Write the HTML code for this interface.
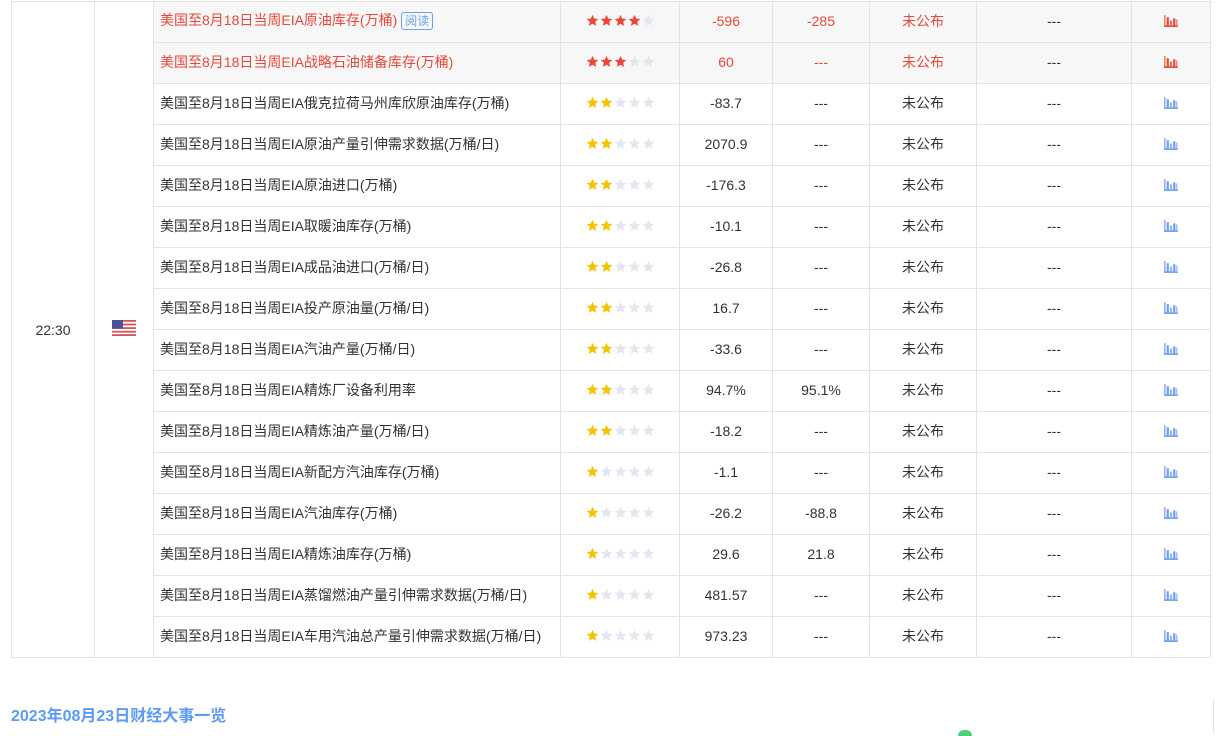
<!DOCTYPE html>
<html><head><meta charset="utf-8"><style>
body{margin:0;width:1219px;height:733px;overflow:hidden;background:#fff;font-family:"Liberation Sans","Noto Sans CJK SC",sans-serif;font-size:14px;color:#333;position:relative}
table{position:absolute;left:11px;top:1px;border-collapse:collapse;table-layout:fixed;width:1200px}
td{border:1px solid #e2e2e2;height:38px;padding:0 0 2px 0;box-sizing:content-box;text-align:center;white-space:nowrap;line-height:16px}
td.n{text-align:left;padding-left:6px}
tr.h td{background:#f7f7f7;color:#e8473a}
tr.h td.t,tr.h td.f{background:#fff;color:#333}
td.t,td.f{padding:0}
.s{display:inline-block;vertical-align:-1px}
.rd{display:inline-block;border:1px solid #6aa0f0;color:#6aa0f0;border-radius:3px;font-size:12px;padding:0 3px;line-height:16px;margin-left:4px}
h2{position:absolute;left:11px;top:702px;margin:0;font-size:16px;color:#5b9bf5;font-weight:bold}
.c{vertical-align:-1px}
</style></head><body>
<svg width="0" height="0" style="position:absolute"><defs>
<symbol id="st" viewBox="0 0 24 24"><path d="M12 1.5l3.1 7.1 7.7.7-5.8 5.1 1.7 7.6L12 18l-6.7 4 1.7-7.6L1.2 9.3l7.7-.7z"/></symbol>
<symbol id="cr" viewBox="0 0 13 11"><rect x="0" y="0" width="1.5" height="11" fill="#f08a50"/><rect x="0" y="9.5" width="13" height="1.5" fill="#e8473a"/><rect x="2.5" y="2" width="2" height="8" fill="#e8473a"/><rect x="5.5" y="5" width="2" height="5" fill="#f06a5a"/><rect x="8.5" y="3" width="2" height="7" fill="#e8473a"/><rect x="11" y="4" width="1.5" height="6" fill="#f08a80"/></symbol>
<symbol id="cb" viewBox="0 0 13 11"><rect x="0" y="0" width="1.5" height="11" fill="#a9a9f5"/><rect x="0" y="9.5" width="13" height="1.5" fill="#6aa0f0"/><rect x="2.5" y="2" width="2" height="8" fill="#6aa0f0"/><rect x="5.5" y="5" width="2" height="5" fill="#8ab8f5"/><rect x="8.5" y="3" width="2" height="7" fill="#6aa0f0"/><rect x="11" y="4" width="1.5" height="6" fill="#a9c0f5"/></symbol>
<symbol id="s4" viewBox="0 0 69 13"><g fill="#e8473a"><use href="#st" x="0" width="13" height="13"/><use href="#st" x="14" width="13" height="13"/><use href="#st" x="28" width="13" height="13"/><use href="#st" x="42" width="13" height="13"/></g><g fill="#e3e6f0"><use href="#st" x="56" width="13" height="13"/></g></symbol>
<symbol id="s3" viewBox="0 0 69 13"><g fill="#e8473a"><use href="#st" x="0" width="13" height="13"/><use href="#st" x="14" width="13" height="13"/><use href="#st" x="28" width="13" height="13"/></g><g fill="#e3e6f0"><use href="#st" x="42" width="13" height="13"/><use href="#st" x="56" width="13" height="13"/></g></symbol>
<symbol id="s2" viewBox="0 0 69 13"><g fill="#f5c400"><use href="#st" x="0" width="13" height="13"/><use href="#st" x="14" width="13" height="13"/></g><g fill="#e3e6f0"><use href="#st" x="28" width="13" height="13"/><use href="#st" x="42" width="13" height="13"/><use href="#st" x="56" width="13" height="13"/></g></symbol>
<symbol id="s1" viewBox="0 0 69 13"><g fill="#f5c400"><use href="#st" x="0" width="13" height="13"/></g><g fill="#e3e6f0"><use href="#st" x="14" width="13" height="13"/><use href="#st" x="28" width="13" height="13"/><use href="#st" x="42" width="13" height="13"/><use href="#st" x="56" width="13" height="13"/></g></symbol>
</defs></svg>
<table>
<colgroup><col style="width:83px"><col style="width:59px"><col style="width:407px"><col style="width:119px"><col style="width:93px"><col style="width:97px"><col style="width:107px"><col style="width:155px"><col style="width:79px"><col style="width:1px"></colgroup>
<tr class="h"><td class="t" rowspan="16">22:30</td><td class="f" rowspan="16"><svg width="24" height="16" viewBox="0 0 24 16"><rect width="24" height="16" rx="2" fill="#fff"/><g fill="#d9535a"><rect y="0" width="24" height="1.8"/><rect y="3.6" width="24" height="1.8"/><rect y="7.2" width="24" height="1.8"/><rect y="10.8" width="24" height="1.8"/><rect y="14.2" width="24" height="1.8"/></g><rect width="11" height="8.5" fill="#4a5597"/></svg></td><td class="n">美国至8月18日当周EIA原油库存(万桶)<span class="rd">阅读</span></td><td><svg class="s" width="69" height="13"><use href="#s4"/></svg></td><td>-596</td><td>-285</td><td>未公布</td><td style="color:#333">---</td><td><svg class="c" width="14" height="12"><use href="#cr"/></svg></td></tr>
<tr class="h"><td class="n">美国至8月18日当周EIA战略石油储备库存(万桶)</td><td><svg class="s" width="69" height="13"><use href="#s3"/></svg></td><td>60</td><td>---</td><td>未公布</td><td style="color:#333">---</td><td><svg class="c" width="14" height="12"><use href="#cr"/></svg></td></tr>
<tr><td class="n">美国至8月18日当周EIA俄克拉荷马州库欣原油库存(万桶)</td><td><svg class="s" width="69" height="13"><use href="#s2"/></svg></td><td>-83.7</td><td>---</td><td>未公布</td><td>---</td><td><svg class="c" width="14" height="12"><use href="#cb"/></svg></td></tr>
<tr><td class="n">美国至8月18日当周EIA原油产量引伸需求数据(万桶/日)</td><td><svg class="s" width="69" height="13"><use href="#s2"/></svg></td><td>2070.9</td><td>---</td><td>未公布</td><td>---</td><td><svg class="c" width="14" height="12"><use href="#cb"/></svg></td></tr>
<tr><td class="n">美国至8月18日当周EIA原油进口(万桶)</td><td><svg class="s" width="69" height="13"><use href="#s2"/></svg></td><td>-176.3</td><td>---</td><td>未公布</td><td>---</td><td><svg class="c" width="14" height="12"><use href="#cb"/></svg></td></tr>
<tr><td class="n">美国至8月18日当周EIA取暖油库存(万桶)</td><td><svg class="s" width="69" height="13"><use href="#s2"/></svg></td><td>-10.1</td><td>---</td><td>未公布</td><td>---</td><td><svg class="c" width="14" height="12"><use href="#cb"/></svg></td></tr>
<tr><td class="n">美国至8月18日当周EIA成品油进口(万桶/日)</td><td><svg class="s" width="69" height="13"><use href="#s2"/></svg></td><td>-26.8</td><td>---</td><td>未公布</td><td>---</td><td><svg class="c" width="14" height="12"><use href="#cb"/></svg></td></tr>
<tr><td class="n">美国至8月18日当周EIA投产原油量(万桶/日)</td><td><svg class="s" width="69" height="13"><use href="#s2"/></svg></td><td>16.7</td><td>---</td><td>未公布</td><td>---</td><td><svg class="c" width="14" height="12"><use href="#cb"/></svg></td></tr>
<tr><td class="n">美国至8月18日当周EIA汽油产量(万桶/日)</td><td><svg class="s" width="69" height="13"><use href="#s2"/></svg></td><td>-33.6</td><td>---</td><td>未公布</td><td>---</td><td><svg class="c" width="14" height="12"><use href="#cb"/></svg></td></tr>
<tr><td class="n">美国至8月18日当周EIA精炼厂设备利用率</td><td><svg class="s" width="69" height="13"><use href="#s2"/></svg></td><td>94.7%</td><td>95.1%</td><td>未公布</td><td>---</td><td><svg class="c" width="14" height="12"><use href="#cb"/></svg></td></tr>
<tr><td class="n">美国至8月18日当周EIA精炼油产量(万桶/日)</td><td><svg class="s" width="69" height="13"><use href="#s2"/></svg></td><td>-18.2</td><td>---</td><td>未公布</td><td>---</td><td><svg class="c" width="14" height="12"><use href="#cb"/></svg></td></tr>
<tr><td class="n">美国至8月18日当周EIA新配方汽油库存(万桶)</td><td><svg class="s" width="69" height="13"><use href="#s1"/></svg></td><td>-1.1</td><td>---</td><td>未公布</td><td>---</td><td><svg class="c" width="14" height="12"><use href="#cb"/></svg></td></tr>
<tr><td class="n">美国至8月18日当周EIA汽油库存(万桶)</td><td><svg class="s" width="69" height="13"><use href="#s1"/></svg></td><td>-26.2</td><td>-88.8</td><td>未公布</td><td>---</td><td><svg class="c" width="14" height="12"><use href="#cb"/></svg></td></tr>
<tr><td class="n">美国至8月18日当周EIA精炼油库存(万桶)</td><td><svg class="s" width="69" height="13"><use href="#s1"/></svg></td><td>29.6</td><td>21.8</td><td>未公布</td><td>---</td><td><svg class="c" width="14" height="12"><use href="#cb"/></svg></td></tr>
<tr><td class="n">美国至8月18日当周EIA蒸馏燃油产量引伸需求数据(万桶/日)</td><td><svg class="s" width="69" height="13"><use href="#s1"/></svg></td><td>481.57</td><td>---</td><td>未公布</td><td>---</td><td><svg class="c" width="14" height="12"><use href="#cb"/></svg></td></tr>
<tr><td class="n">美国至8月18日当周EIA车用汽油总产量引伸需求数据(万桶/日)</td><td><svg class="s" width="69" height="13"><use href="#s1"/></svg></td><td>973.23</td><td>---</td><td>未公布</td><td>---</td><td><svg class="c" width="14" height="12"><use href="#cb"/></svg></td></tr>
</table>
<h2>2023年08月23日财经大事一览</h2>
<div style="position:absolute;left:1213px;top:700px;width:1px;height:33px;background:#e2e2e2"></div>
<div style="position:absolute;left:958px;top:730px;width:14px;height:6px;border-radius:7px 7px 0 0;background:#4cd07a"></div>
</body></html>
